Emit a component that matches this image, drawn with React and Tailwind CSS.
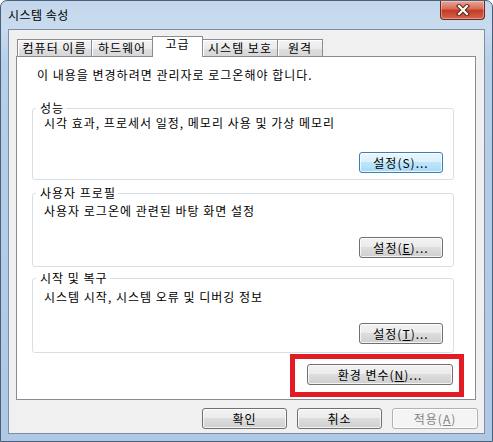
import React from "react";

function Btn({ children, variant = "normal", className = "" }) {
  const v =
    variant === "default"
      ? "border-[#3c7fb1] bg-[linear-gradient(#eaf6fd,#d9f0fc_50%,#bee6fd_50%,#a7d9f5)] text-black"
      : variant === "disabled"
      ? "border-[#adb2b5] bg-[#f4f4f4] text-[#838383]"
      : "border-[#707070] bg-[linear-gradient(#f2f2f2,#ebebeb_50%,#dddddd_50%,#cfcfcf)] text-black";
  return (
    <div
      className={`flex items-center justify-center h-[21px] rounded-[3px] border text-[12px] leading-[14px] shadow-[inset_0_0_0_1px_rgba(255,255,255,0.75)] ${v} ${className}`}
    >
      {children}
    </div>
  );
}

function Tab({ children, selected = false, className = "" }) {
  if (selected) {
    return (
      <div
        className={`relative z-10 -ml-px h-[21px] border-l border-t border-r border-[#898c95] bg-white flex justify-center text-[12px] leading-[14px] pt-0 ${className}`}
      >
        {children}
      </div>
    );
  }
  return (
    <div
      className={`h-[18px] border-l border-t border-r border-[#898c95] bg-[linear-gradient(#f3f3f3,#ebebeb_50%,#dedede_50%,#d6d6d6)] shadow-[inset_1px_1px_0_#fff] flex justify-center text-[12px] leading-[14px] pt-[1px] ${className}`}
    >
      {children}
    </div>
  );
}

export default function App() {
  return (
    <div className="w-[493px] h-[442px] flex flex-col rounded-t-[7px] border border-[#4a5f78] bg-[linear-gradient(180deg,#c3d7ec_0%,#c9dbee_28px,#b7cfe8_60px,#aec8e5_100%)] font-['Noto_Sans_CJK_KR','Noto_Sans',sans-serif] tracking-[1px] text-black overflow-hidden">
      {/* title bar */}
      <div className="h-[28px] flex justify-between items-start shrink-0">
        <div className="pl-[7px] pt-[7px] text-[12px] leading-[14px] text-black tracking-[0.5px]">
          시스템 속성
        </div>
        <div className="mr-[7px] w-[45px] h-[19px] rounded-b-[4px] border border-t-0 border-[#6b2a1f] bg-[linear-gradient(#eaa395,#d66a55_45%,#c23a25_50%,#d4654a)] shadow-[inset_0_0_0_1px_rgba(255,255,255,0.35)] flex items-center justify-center">
          <svg width="14" height="12" viewBox="0 0 14 12">
            <path d="M3 2 L11 10 M11 2 L3 10" stroke="#5a2418" strokeWidth="4.2" strokeLinecap="square" />
            <path d="M3 2 L11 10 M11 2 L3 10" stroke="#ffffff" strokeWidth="2.2" strokeLinecap="square" />
          </svg>
        </div>
      </div>

      {/* client area */}
      <div className="ml-[7px] w-[477px] h-[405px] border border-[#7f8fa3] bg-[#f0f0f0] flex flex-col shrink-0">
        {/* tabs */}
        <div className="mt-[6px] ml-[8px] h-[21px] flex items-end">
          <Tab className="w-[75px] ml-0">컴퓨터 이름</Tab>
          <Tab className="w-[62px] -ml-px">하드웨어</Tab>
          <Tab selected className="w-[51px]">고급</Tab>
          <Tab className="w-[76px] -ml-px">시스템 보호</Tab>
          <Tab className="w-[46px] -ml-px">원격</Tab>
        </div>

        {/* panel */}
        <div className="-mt-px ml-[7px] w-[460px] h-[344px] border border-[#898c95] bg-white flex flex-col">
          <div className="mt-[11px] pl-[20px] text-[12px] leading-[14px]">
            이 내용을 변경하려면 관리자로 로그온해야 합니다.
          </div>

          {/* 성능 */}
          <fieldset className="mt-[19px] ml-[15px] w-[422px] rounded-[3px] border border-[#d5dfe5]">
            <legend className="ml-[3px] pl-[4px] pr-[2px] text-[12px] leading-[14px]">성능</legend>
            <div className="mt-[1px] pl-[11px] text-[12px] leading-[14px]">
              시각 효과, 프로세서 일정, 메모리 사용 및 가상 메모리
            </div>
            <div className="mt-[22px] mb-[6px] pr-[10px] flex justify-end">
              <Btn variant="default" className="w-[84px]">설정(S)...</Btn>
            </div>
          </fieldset>

          {/* 사용자 프로필 */}
          <fieldset className="mt-[6px] ml-[15px] w-[422px] rounded-[3px] border border-[#d5dfe5]">
            <legend className="ml-[3px] pl-[4px] pr-[2px] text-[12px] leading-[14px]">사용자 프로필</legend>
            <div className="mt-[4px] pl-[11px] text-[12px] leading-[14px]">
              사용자 로그온에 관련된 바탕 화면 설정
            </div>
            <div className="mt-[19px] mb-[8px] pr-[10px] flex justify-end">
              <Btn className="w-[84px]">
                설정(<span className="underline">E</span>)...
              </Btn>
            </div>
          </fieldset>

          {/* 시작 및 복구 */}
          <fieldset className="mt-[4px] ml-[15px] w-[422px] rounded-[3px] border border-[#d5dfe5]">
            <legend className="ml-[3px] pl-[4px] pr-[2px] text-[12px] leading-[14px]">시작 및 복구</legend>
            <div className="mt-[5px] pl-[11px] text-[12px] leading-[14px]">
              시스템 시작, 시스템 오류 및 디버깅 정보
            </div>
            <div className="mt-[19px] mb-[8px] pr-[10px] flex justify-end">
              <Btn className="w-[84px]">
                설정(<span className="underline">T</span>)...
              </Btn>
            </div>
          </fieldset>

          {/* 환경 변수 */}
          <div className="mt-[1px] ml-[273px] w-[174px] h-[43px] border-[5px] border-[#e31b23] pt-[5px] pl-[12px]">
            <Btn className="w-[146px]">
              환경 변수(<span className="underline">N</span>)...
            </Btn>
          </div>
        </div>

        {/* bottom buttons */}
        <div className="mt-[8px] pr-[6px] flex justify-end gap-[10px]">
          <Btn className="w-[85px]">확인</Btn>
          <Btn className="w-[85px]">취소</Btn>
          <Btn variant="disabled" className="w-[86px]">
            적용(<span className="underline">A</span>)
          </Btn>
        </div>
      </div>
    </div>
  );
}
